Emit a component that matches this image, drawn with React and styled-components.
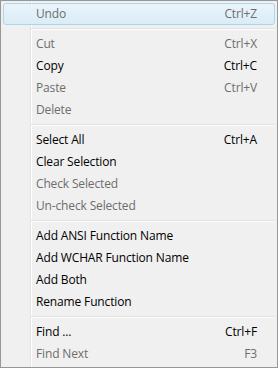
import React from "react";
import styled, { createGlobalStyle } from "styled-components";

const Global = createGlobalStyle`
  html, body { margin: 0; padding: 0; background: #f0f0f0; }
  body { font-family: "Open Sans", "Liberation Sans", sans-serif; }
`;

const Menu = styled.div`
  box-sizing: border-box;
  width: 278px;
  height: 368px;
  border: 1px solid #979797;
  padding: 2px;
  background-color: #f0f0f0;
  background-image: linear-gradient(to right,
    transparent 29px, #e2e3e3 29px, #e2e3e3 30px, #ffffff 30px, #ffffff 31px, transparent 31px);
  background-repeat: no-repeat;
  display: flex;
  flex-direction: column;
`;

const Row = styled.div`
  box-sizing: border-box;
  height: 22px;
  display: flex;
  align-items: center;
  justify-content: space-between;
  padding: 0 17px 2px 32px;
  font-size: 12px;
  letter-spacing: -0.15px;
  color: ${(p) => (p.$disabled ? "#6d6d6d" : "#000000")};
  border: 1px solid transparent;
  border-radius: 3px;
  ${(p) =>
    p.$active &&
    `
    border-color: #a8d8eb;
    background: linear-gradient(to bottom, rgba(232,245,252,0.85), rgba(214,236,248,0.85));
  `}
`;

const Label = styled.span`
  white-space: nowrap;
`;

const Key = styled.span`
  white-space: nowrap;
`;

const Separator = styled.div`
  height: 8px;
  margin-left: 28px;
  display: flex;
  flex-direction: column;
  justify-content: center;
  &::before {
    content: "";
    display: block;
    height: 1px;
    background: #e0e0e0;
    border-bottom: 1px solid #ffffff;
  }
`;

const items = [
  { label: "Undo", key: "Ctrl+Z", disabled: true, active: true },
  "sep",
  { label: "Cut", key: "Ctrl+X", disabled: true },
  { label: "Copy", key: "Ctrl+C" },
  { label: "Paste", key: "Ctrl+V", disabled: true },
  { label: "Delete", disabled: true },
  "sep",
  { label: "Select All", key: "Ctrl+A" },
  { label: "Clear Selection" },
  { label: "Check Selected", disabled: true },
  { label: "Un-check Selected", disabled: true },
  "sep",
  { label: "Add ANSI Function Name" },
  { label: "Add WCHAR Function Name" },
  { label: "Add Both" },
  { label: "Rename Function" },
  "sep",
  { label: "Find ...", key: "Ctrl+F" },
  { label: "Find Next", key: "F3", disabled: true },
];

export default function App() {
  return (
    <>
      <Global />
      <Menu>
        {items.map((it, i) =>
          it === "sep" ? (
            <Separator key={i} />
          ) : (
            <Row key={i} $disabled={it.disabled} $active={it.active}>
              <Label>{it.label}</Label>
              {it.key && <Key>{it.key}</Key>}
            </Row>
          )
        )}
      </Menu>
    </>
  );
}
